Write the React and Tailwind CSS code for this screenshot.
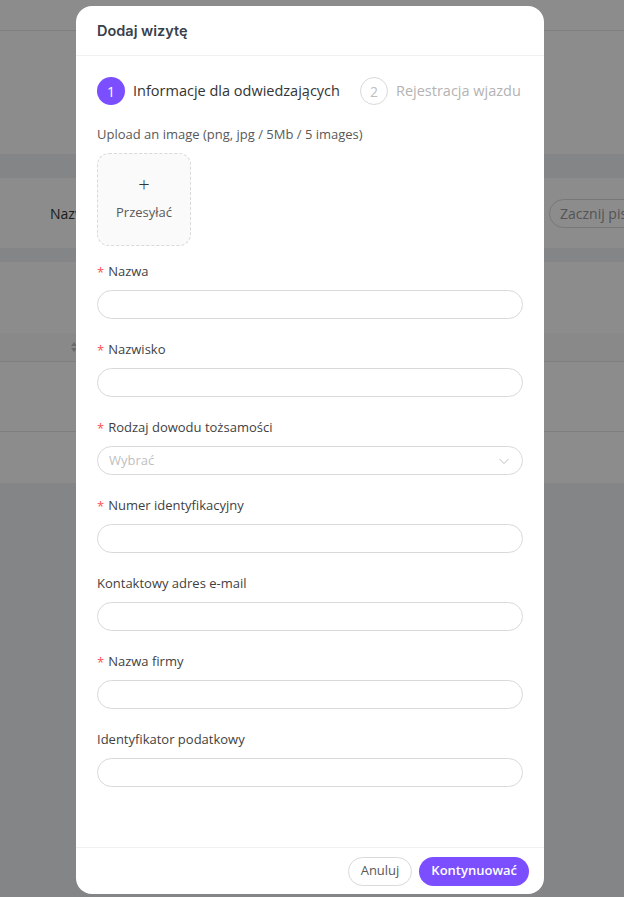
import React from 'react';

const fields = [
  { label: 'Nazwa', required: true },
  { label: 'Nazwisko', required: true },
  { label: 'Rodzaj dowodu tożsamości', required: true, select: true },
  { label: 'Numer identyfikacyjny', required: true },
  { label: 'Kontaktowy adres e-mail', required: false },
  { label: 'Nazwa firmy', required: true },
  { label: 'Identyfikator podatkowy', required: false },
];

const Field = ({ label, required, select }) => (
  <div className="mb-[21px]">
    <div className="flex items-center h-5 mb-2 text-[13px] text-[#3f3f3f]">
      {required && <span className="text-[#ff4d4f] mr-[4px] text-[13px] leading-none">*</span>}
      {label}
    </div>
    {select ? (
      <div className="h-[29px] rounded-full border border-[#d9d9d9] flex items-center justify-between pl-[11px] pr-[12px]">
        <span className="text-[13px] text-[#bfbfbf]">Wybrać</span>
        <svg width="12" height="12" viewBox="0 0 12 12" fill="none">
          <path d="M1.5 4l4.5 4.5L10.5 4" stroke="#bfbfbf" strokeWidth="1" />
        </svg>
      </div>
    ) : (
      <div className="h-[29px] rounded-full border border-[#d9d9d9]" />
    )}
  </div>
);

const Background = () => (
  <div className="h-[897px] bg-[#f0f2f5] flex flex-col">
    <div className="h-[31px] bg-white border-b border-[#e8e8e8]" />
    <div className="h-[123px] bg-white" />
    <div className="h-[24px]" />
    <div className="h-[70px] bg-white flex items-center pl-[50px] overflow-hidden">
      <span className="text-[14px] text-[#333]">Nazwa</span>
      <div className="ml-auto mr-[-40px] w-[115px] shrink-0 h-[29px] rounded-full border border-[#d9d9d9] flex items-center pl-[10px] text-[14px] text-[#999] whitespace-nowrap">
        Zacznij pisać
      </div>
    </div>
    <div className="h-[14px]" />
    <div className="h-[221px] bg-white flex flex-col">
      <div className="h-[71px]" />
      <div className="h-[29px] bg-[#fafafa] border-b border-[#e8e8e8] flex items-center pl-[70px]">
        <svg width="8" height="12" viewBox="0 0 8 12">
          <path d="M4 1L7 5H1z" fill="#bfbfbf" />
          <path d="M4 11L7 7H1z" fill="#bfbfbf" />
        </svg>
      </div>
      <div className="h-[70px] border-b border-[#e8e8e8]" />
      <div className="flex-1" />
    </div>
  </div>
);

export default function App() {
  return (
    <div className="relative h-[897px] overflow-hidden" style={{ fontFamily: '"Open Sans", sans-serif' }}>
      <Background />
      <div className="absolute inset-0 bg-black/[0.45]">
        <div className="ml-[76px] mt-[6px] w-[468px] h-[888px] bg-white rounded-[16px] flex flex-col">
          <div className="h-[50px] flex items-center px-[21px] border-b border-[#f0f0f0] shrink-0">
            <span className="text-[14.5px] font-semibold text-[#36414c]" style={{ fontFamily: 'Inter, sans-serif' }}>
              Dodaj wizytę
            </span>
          </div>
          <div className="flex-1 px-[21px] pt-[21px]">
            <div className="flex items-center h-7 whitespace-nowrap">
              <div className="w-7 h-7 shrink-0 rounded-full bg-[#7b4fff] text-white text-[14px] flex items-center justify-center">1</div>
              <span className="ml-2 text-[14.5px] text-[#333]">Informacje dla odwiedzających</span>
              <div className="ml-5 w-7 h-7 shrink-0 rounded-full border border-[#d9d9d9] text-[#bfbfbf] text-[14px] flex items-center justify-center">2</div>
              <span className="ml-2 text-[14.5px] text-[#b3b3b3]">Rejestracja wjazdu</span>
            </div>
            <div className="mt-5 h-5 flex items-center text-[13px] text-[#595959]">
              Upload an image (png, jpg / 5Mb / 5 images)
            </div>
            <div className="mt-2 w-[94px] h-[93px] rounded-[12px] border border-dashed border-[#d9d9d9] bg-[#fafafa] flex flex-col items-center justify-center">
              <span className="text-[20px] leading-4 font-light text-[#333]">+</span>
              <span className="mt-[9px] text-[13px] text-[#595959] leading-5">Przesyłać</span>
            </div>
            <div className="mt-4">
              {fields.map((f) => (
                <Field key={f.label} {...f} />
              ))}
            </div>
          </div>
          <div className="h-[47px] border-t border-[#f0f0f0] flex items-center justify-end pr-[15px] gap-[7px] shrink-0">
            <button className="h-[29px] px-[12px] rounded-full border border-[#d9d9d9] text-[13px] text-[#595959]">Anuluj</button>
            <button className="h-[29px] px-[12px] rounded-full bg-[#7b4fff] text-[13px] font-semibold text-white">Kontynuować</button>
          </div>
        </div>
      </div>
    </div>
  );
}
